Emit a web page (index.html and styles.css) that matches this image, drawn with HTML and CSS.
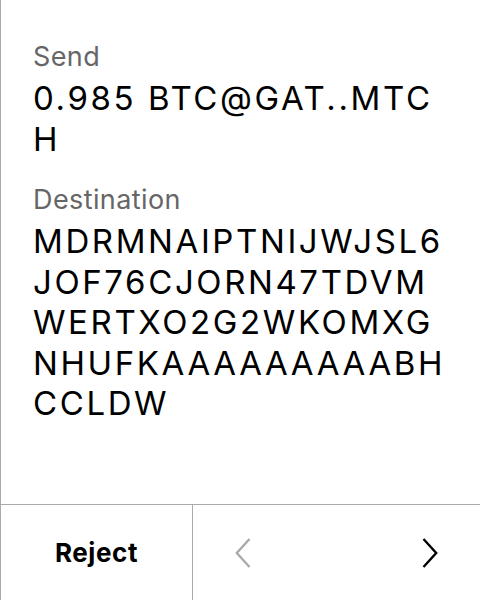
FILE: index.html
```html
<!DOCTYPE html>
<html>
<head>
<meta charset="utf-8">
<link rel="stylesheet" href="styles.css">
</head>
<body>
<div class="screen">
  <div class="content">
    <div class="field">
      <div class="label">Send</div>
      <div class="value">0.985 BTC@GAT..MTC<br>H</div>
    </div>
    <div class="field">
      <div class="label">Destination</div>
      <div class="value">MDRMNAIPTNIJWJSL6<br>JOF76CJORN47TDVM<br>WERTXO2G2WKOMXG<br>NHUFKAAAAAAAAABH<br>CCLDW</div>
    </div>
  </div>
  <div class="actions">
    <div class="reject">Reject</div>
    <div class="nav">
      <svg class="chev prev" width="16" height="30" viewBox="0 0 16 30"><path d="M14.5 1 L1.8 15 L14.5 29" fill="none" stroke="#aaaaaa" stroke-width="2.4"/></svg>
      <svg class="chev next" width="16" height="30" viewBox="0 0 16 30"><path d="M1.5 1 L14.2 15 L1.5 29" fill="none" stroke="#000" stroke-width="2.4"/></svg>
    </div>
  </div>
</div>
</body>
</html>
```
FILE: styles.css
```css
html, body { margin: 0; padding: 0; background: #fff; }
body { font-family: Inter, "Noto Sans", sans-serif; color: #000; }
.screen {
  width: 480px; height: 600px; box-sizing: border-box;
  border-left: 1px solid #aaaaaa;
  display: flex; flex-direction: column;
}
.content { flex: 1; padding: 40px 0 0 32px; display: flex; flex-direction: column; gap: 24px; }
.label { font-size: 27px; color: #666; line-height: 34px; letter-spacing: 0.4px; }
.value { font-size: 33px; line-height: 40.5px; margin-top: 4px; letter-spacing: 2.6px; }
.actions { height: 96px; border-top: 1px solid #aaaaaa; display: flex; box-sizing: border-box; }
.reject { width: 192px; box-sizing: border-box; border-right: 1px solid #aaaaaa; display: flex; align-items: center; justify-content: center; font-size: 26px; font-weight: 700; letter-spacing: 0.6px; }
.nav { flex: 1; display: flex; align-items: center; justify-content: space-between; padding: 0 42px 0 42px; }
.chev { display: block; }
```
